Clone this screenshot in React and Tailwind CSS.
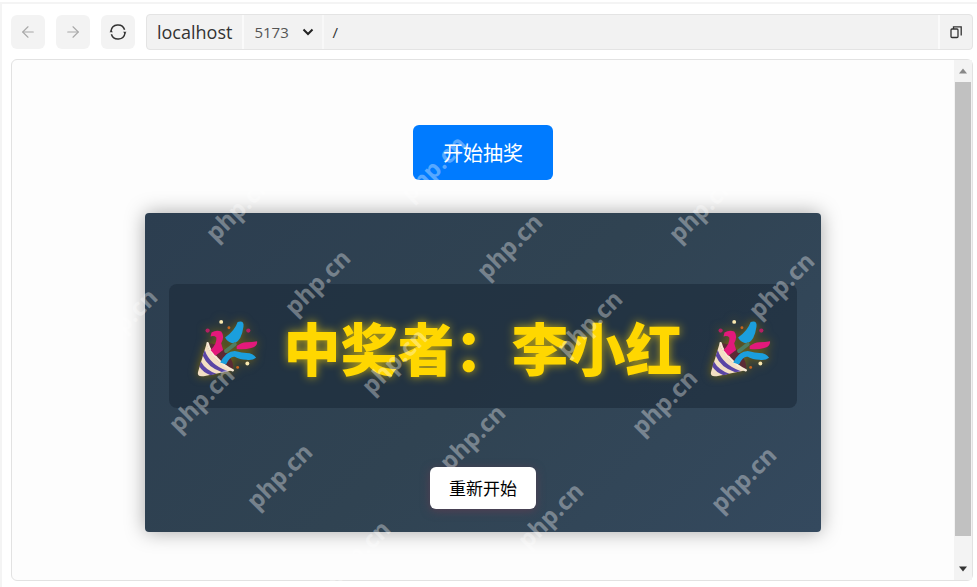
import React, { useState } from 'react';
import { ArrowLeft, ArrowRight } from 'lucide-react';

const names = ['李小红'];

const marks = [
    { x: 238, y: 208 },
    { x: 701, y: 209 },
    { x: 433, y: 168 },
    { x: 509, y: 246 },
    { x: 317, y: 282 },
    { x: 781, y: 285 },
    { x: 124, y: 321 },
    { x: 589, y: 323 },
    { x: 394, y: 361 },
    { x: 201, y: 399 },
    { x: 664, y: 402 },
    { x: 472, y: 437 },
    { x: 279, y: 476 },
    { x: 743, y: 479 },
    { x: 550, y: 515 },
    { x: 357, y: 553 }
];

function PartyPopper() {
    return (
        <svg
            viewBox="0 0 64 64"
            className="mt-1.5 size-15.5 shrink-0 drop-shadow-[0_0_5px_rgba(150,120,0,0.8)]"
            aria-hidden="true"
        >
            {/* cone */}
            <path d="M11 26 L2 56 Q1 61 8 60 L38 54 Q27 49 20 41 Q13 34 11 26Z" fill="#f3dfc4" />
            <path d="M9 33 Q14 48 33 55 L27 56 Q12 51 7 39Z" fill="#5a45a5" />
            <path d="M5 45 Q10 54 21 57.5 L15 59 Q7 56 3.5 50Z" fill="#5a45a5" />
            <path d="M12 26 Q23 26 32 36 Q40 46 38 53 Q26 49 19 40 Q12 31 12 26Z" fill="#5b2b35" />
            <path d="M12 26 Q14 34 21 41 Q28 49 38 54" fill="none" stroke="#f7ead5" strokeWidth="2.5" strokeLinecap="round" />
            {/* streamers */}
            <path d="M16 15 Q21 12 26 14 Q30 19 26 26 L28 33 L20 39 L15 33 Q22 26 21 20 Q19 18 15 19Z" fill="#e3197b" />
            <path d="M43 4 Q50 2 49 9 Q47 23 40 26 Q33 26 30 20 Q40 13 43 4Z" fill="#1b9fdd" />
            <path d="M25 46 Q31 34 40 34 Q48 36 52 36 Q59 36 62 41 Q58 44 52 43 Q45 43 40 40 Q35 39 31 48Z" fill="#1b9fdd" />
            <path d="M31 34 L40 27" stroke="#4e7d62" strokeWidth="4" strokeLinecap="round" />
            <path d="M42 29 Q47 25 52 25 Q58 25 63 24 Q64 29 57 31 Q50 33 42 32Z" fill="#e3197b" />
            {/* confetti */}
            <circle cx="26" cy="4" r="2" fill="#fbe9b0" />
            <circle cx="53" cy="47" r="2" fill="#fbe9b0" />
            <circle cx="12" cy="13" r="2.2" fill="#b51f63" />
            <circle cx="54" cy="13" r="2.2" fill="#b51f63" />
            <circle cx="43" cy="51" r="1.5" fill="#c6651e" />
            <circle cx="34" cy="10" r="1.5" fill="#c6651e" />
        </svg>
    );
}

function Toolbar() {
    const [port, setPort] = useState('5173');
    const [path, setPath] = useState('/');

    return (
        <header className="flex items-center pt-2.5">
            <div className="mr-2.75 flex gap-2.75">
                <button aria-label="Back" className="flex h-8.5 w-8.5 items-center justify-center rounded-md bg-[#f3f3f3] text-[#a8a8a8]">
                    <ArrowLeft size={18} strokeWidth={1.5} />
                </button>
                <button aria-label="Forward" className="flex h-8.5 w-8.5 items-center justify-center rounded-md bg-[#f3f3f3] text-[#a8a8a8]">
                    <ArrowRight size={18} strokeWidth={1.5} />
                </button>
                <button aria-label="Reload" className="flex h-8.5 w-8.5 items-center justify-center rounded-md bg-[#f3f3f3] text-[#333]">
                    <svg viewBox="0 0 18 18" className="size-4.5" fill="none" stroke="currentColor" strokeWidth="1.5">
                        <path d="M2 8a7 7 0 0 1 13.6-1.2M16 10a7 7 0 0 1-13.6 1.2" />
                        <path d="M0.5 9.2h3.4L2.2 7zM17.5 8.8h-3.4l1.7 2.2z" fill="currentColor" stroke="none" />
                    </svg>
                </button>
            </div>
            <div className="flex h-9 min-w-0 flex-1 items-stretch rounded-sm border border-[#e4e4e4] bg-[#f2f2f2] text-[#333]">
                <span className="flex items-center border-r-2 border-[#fafafa] px-2.5 text-lg">localhost</span>
                <div className="relative flex items-center border-r-2 border-[#f8f8f8]">
                    <select
                        aria-label="Port"
                        value={port}
                        onChange={(e) => setPort(e.target.value)}
                        className="h-full w-19.5 appearance-none bg-transparent pl-2.5 text-[15px] text-[#555] focus:outline-none"
                    >
                        <option value="5173">5173</option>
                    </select>
                    <svg viewBox="0 0 12 8" className="pointer-events-none absolute right-2 h-2 w-3" fill="none" stroke="#222" strokeWidth="2">
                        <path d="M1.5 1.5L6 6l4.5-4.5" />
                    </svg>
                </div>
                <input
                    aria-label="Path"
                    type="text"
                    value={path}
                    onChange={(e) => setPath(e.target.value)}
                    className="min-w-0 flex-1 bg-transparent px-2 text-[15px] focus:outline-none"
                />
                <button aria-label="Open in new window" className="flex w-8.5 items-center justify-center border-l-2 border-[#fafafa]">
                    <svg viewBox="0 0 14 14" className="size-3.5" fill="none" stroke="currentColor" strokeWidth="1.3">
                        <rect x="2" y="4" width="7" height="8.5" rx="1" />
                        <path d="M4.5 4V1.8h7.7v8.7" />
                    </svg>
                </button>
            </div>
        </header>
    );
}

function Scrollbar() {
    return (
        <div className="flex w-4.5 shrink-0 flex-col items-center bg-[#f3f3f3]" aria-hidden="true">
            <div className="flex h-5.5 items-center">
                <svg viewBox="0 0 8 5" className="h-1.5 w-2" fill="#888"><path d="M4 0l4 5H0z" /></svg>
            </div>
            <div className="w-4 flex-1 bg-[#c1c1c1]"></div>
            <div className="flex h-11 items-end pb-2">
                <svg viewBox="0 0 8 5" className="h-1.5 w-2" fill="#333"><path d="M4 5L0 0h8z" /></svg>
            </div>
        </div>
    );
}

export default function App() {
    const [winner, setWinner] = useState(names[0]);

    const draw = () => {
        setWinner(names[Math.floor(Math.random() * names.length)]);
    };

    return (
        <div className="relative min-h-screen overflow-hidden bg-white font-['Open_Sans','Noto_Sans_CJK_SC',sans-serif]">
            <div className="mt-0.5 border-t-2 border-l-2 border-[#f4f4f4] pr-1 pb-1.5 pl-2.25">
                <Toolbar />
                <div className="mt-2.25 flex rounded-md border border-[#e2e2e2] bg-[#fdfdfd]">
                    <main className="flex min-w-0 flex-1 flex-col items-center pt-16.25 pb-12">
                        <button
                            onClick={draw}
                            className="h-13.75 rounded-md bg-[#007bff] px-7.5 font-['Noto_Sans_CJK_SC',sans-serif] text-xl text-white"
                        >
                            开始抽奖
                        </button>
                        <section className="mt-8.25 flex w-43/60 flex-col items-center rounded-sm bg-linear-135 from-[#2c3e50] via-[#304352] to-[#34495e] px-6 pt-17.75 pb-5.75 shadow-[0_0_20px_rgba(0,0,0,0.35)]">
                            <div className="flex h-31 w-full items-center justify-center gap-6.5 rounded-lg bg-[#1a2a38]/60">
                                <PartyPopper />
                                <h1 className="font-['Noto_Sans_CJK_SC',sans-serif] text-[57px] leading-none font-black whitespace-nowrap text-[#ffd700] [text-shadow:0_0_10px_rgba(255,215,0,0.7)]">
                                    中奖者：{winner}
                                </h1>
                                <PartyPopper />
                            </div>
                            <button
                                onClick={draw}
                                className="mt-14.75 h-10.5 rounded-md bg-white px-4.75 font-['Noto_Sans_CJK_SC',sans-serif] text-[17px] text-black shadow-[0_2px_10px_rgba(110,60,80,0.6)]"
                            >
                                重新开始
                            </button>
                        </section>
                    </main>
                    <Scrollbar />
                </div>
            </div>
            {/* tiled watermark over the whole page */}
            {marks.map((mark, index) => (
                <span
                    key={index}
                    className="pointer-events-none absolute -translate-x-1/2 -translate-y-1/2 -rotate-45 text-2xl font-bold whitespace-nowrap text-white/35"
                    style={{ left: mark.x, top: mark.y }}
                >
                    php.cn
                </span>
            ))}
        </div>
    );
}
